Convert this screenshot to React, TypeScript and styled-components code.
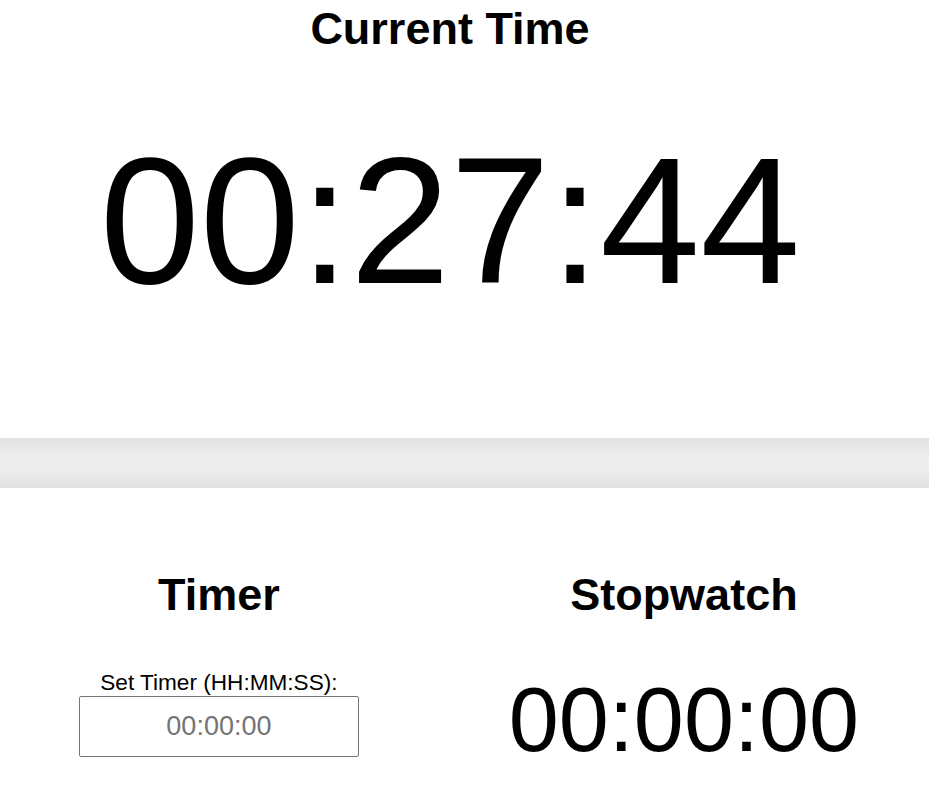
import React from "react";
import styled, { createGlobalStyle } from "styled-components";

const GlobalStyle = createGlobalStyle`
  body {
    margin: 0;
    font-family: "Liberation Sans", Arial, sans-serif;
    background: #ffffff;
    color: #000000;
  }
`;

const ClockSection = styled.section`
  display: flex;
  flex-direction: column;
  align-items: center;
  height: 438px;
  padding-right: 29px;
`;

const Heading = styled.h1`
  margin: 3px 0 0;
  font-size: 45px;
  font-weight: bold;
  line-height: normal;
`;

const SubHeading = styled.h2`
  margin: 0;
  font-size: 45px;
  font-weight: bold;
  line-height: normal;
`;

const Display = styled.div<{ $size: number }>`
  font-size: ${(p) => p.$size}px;
  line-height: normal;
  letter-spacing: 0;
`;

const BigDisplay = styled(Display)`
  margin-top: 62px;
`;

const Divider = styled.div`
  height: 50px;
  background: linear-gradient(
    to bottom,
    #e1e1e1 0%,
    #ebebeb 30%,
    #eeeeee 50%,
    #ebebeb 70%,
    #e1e1e1 100%
  );
`;

const Panels = styled.div`
  display: flex;
  justify-content: space-around;
  padding-top: 81px;
`;

const Panel = styled.div`
  display: flex;
  flex-direction: column;
  align-items: center;
`;

const TimerPanel = styled(Panel)`
  width: 300px;
  margin-left: -1px;
`;

const Label = styled.label`
  margin-top: 49px;
  font-size: 22.6px;
`;

const TimeInput = styled.input`
  box-sizing: border-box;
  width: 280px;
  height: 61px;
  border: 1px solid #767676;
  border-radius: 2px;
  font-family: "Liberation Sans", Arial, sans-serif;
  font-size: 27px;
  text-align: center;
  color: #000;

  &::placeholder {
    color: #757575;
  }
`;

const StopwatchDisplay = styled(Display)`
  margin-top: 48px;
`;

export default function App() {
  const now = "00:27:44";

  return (
    <>
      <GlobalStyle />
      <ClockSection>
        <Heading>Current Time</Heading>
        <BigDisplay $size={180}>{now}</BigDisplay>
      </ClockSection>
      <Divider />
      <Panels>
        <TimerPanel>
          <SubHeading>Timer</SubHeading>
          <Label htmlFor="timer-input">Set Timer (HH:MM:SS):</Label>
          <TimeInput id="timer-input" type="text" placeholder="00:00:00" />
        </TimerPanel>
        <Panel>
          <SubHeading>Stopwatch</SubHeading>
          <StopwatchDisplay $size={90}>00:00:00</StopwatchDisplay>
        </Panel>
      </Panels>
    </>
  );
}
